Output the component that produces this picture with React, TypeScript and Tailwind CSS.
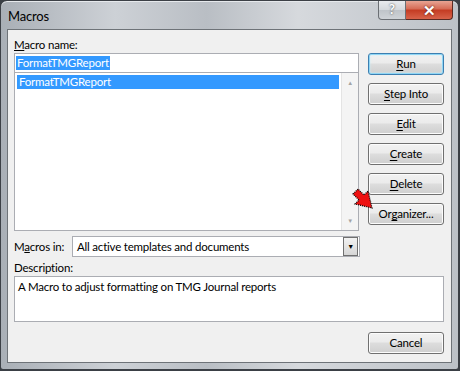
import React from "react";

const ui = { fontFamily: 'Lato, "Liberation Sans", sans-serif' };

function Btn({ u, rest, pre = "", primary = false }: { u: string; rest: string; pre?: string; primary?: boolean }) {
  return (
    <button
      className={
        "flex h-[22px] w-[76px] items-center justify-center rounded-[3px] border bg-[linear-gradient(#f2f2f2_0%,#ebebeb_45%,#dddddd_50%,#cfcfcf_100%)] text-[11.5px] tracking-[-0.2px] text-black " +
        (primary
          ? "border-[#3c7fb1] shadow-[inset_0_0_0_1px_#8fd6f5,inset_0_0_2px_1px_#c8eefc]"
          : "border-[#707070] shadow-[inset_0_0_0_1px_#fcfcfc]")
      }
    >
      {pre}
      <span className="underline underline-offset-2">{u}</span>
      {rest}
    </button>
  );
}

function RedArrow() {
  return (
    <svg width="22" height="22" viewBox="0 0 22 22" className="absolute left-[351px] top-[187px]">
      <polygon
        points="1,6 6,1 12,7 16,3 20,20 3,16 7,12"
        fill="#ee1111"
        stroke="#000"
        strokeWidth="1.2"
        strokeDasharray="1 1"
      />
    </svg>
  );
}

export default function App() {
  return (
    <div className="h-[371px] w-[460px] bg-[#3a3f45]" style={ui}>
      <div className="relative h-[370px] w-[459px] rounded-t-[7px] rounded-b-[3px] border border-[#3c4046] bg-[linear-gradient(90deg,#a9afb6_0%,#cdd1d6_25%,#b9bec4_45%,#d6d9dd_65%,#bcc1c7_100%)] shadow-[inset_0_1px_0_#e6e9ec]">
        {/* title bar */}
        <div className="flex h-[28px] items-start">
          <div className="pl-[7px] pt-[6px] text-[13px] tracking-[-0.2px] text-black">Macros</div>
          <div className="ml-auto mr-[5px] flex">
            <div className="flex h-[19px] w-[28px] items-center justify-center rounded-bl-[4px] border border-t-0 border-[#6b6f74] bg-[linear-gradient(#e9ebee_0%,#d4d8dc_50%,#bfc4c9_51%,#cfd3d7_100%)] text-[13px] font-bold text-white [text-shadow:0_0_2px_#333]">
              ?
            </div>
            <div className="flex h-[19px] w-[47px] items-center justify-center rounded-br-[4px] border border-l-0 border-t-0 border-[#5a2a22] bg-[linear-gradient(#e8a493_0%,#d56a54_45%,#c43b22_50%,#d8634a_100%)] text-[15px] font-bold text-white [text-shadow:0_0_2px_#4a1008]">
              ✕
            </div>
          </div>
        </div>
        {/* client */}
        <div className="mx-[6px] h-[334px] border border-[#6e7378] bg-[#f0f0f0] pl-[6px] pr-[7px] pt-[7px] text-[11.5px] tracking-[-0.2px] text-black">
          <div className="flex gap-[9px]">
            <div className="w-[346px]">
              <div className="h-[16px] leading-[16px]">
                <span className="underline">M</span>acro name:
              </div>
              <div className="flex h-[20px] items-center border border-[#abadb3] bg-white pl-[1px]">
                <span className="bg-[#3399ff] px-[1px] leading-[14px] text-white">FormatTMGReport</span>
              </div>
              <div className="flex h-[158px] border border-t-0 border-[#abadb3] bg-white">
                <div className="flex-1 p-[2px]">
                  <div className="h-[14px] bg-[#3399ff] pl-[2px] leading-[14px] text-white">FormatTMGReport</div>
                </div>
                <div className="flex w-[17px] flex-col items-center justify-between border-l border-[#e4e4e4] bg-[#f4f4f4] py-[5px] text-[6px] text-[#a3a3a3]">
                  <span>▲</span>
                  <span>▼</span>
                </div>
              </div>
            </div>
            <div className="mt-[16px] flex flex-col gap-[8px]">
              <Btn u="R" rest="un" primary />
              <Btn u="S" rest="tep Into" />
              <Btn u="E" rest="dit" />
              <Btn u="C" rest="reate" />
              <Btn u="D" rest="elete" />
              <Btn pre="Or" u="g" rest="anizer..." />
            </div>
          </div>
          <div className="mt-[5px] flex h-[21px] items-center">
            <div className="w-[58px]">
              M<span className="underline">a</span>cros in:
            </div>
            <div className="flex h-[21px] w-[288px] items-center border border-[#abadb3] bg-white pl-[4px]">
              <span className="flex-1">All active templates and documents</span>
              <div className="mr-[1px] flex h-[19px] w-[15px] items-center justify-center border border-[#707070] bg-[linear-gradient(#f2f2f2,#d6d6d6)] text-[7px]">
                ▼
              </div>
            </div>
          </div>
          <div className="mt-[3px] h-[16px] leading-[16px]">Description:</div>
          <div className="h-[46px] border border-[#abadb3] bg-white pl-[3px] pt-[2px] leading-[15px]">
            A Macro to adjust formatting on TMG Journal reports
          </div>
          <div className="mt-[10px] flex justify-end">
            <Btn u="" rest="Cancel" />
          </div>
        </div>
        <RedArrow />
      </div>
    </div>
  );
}
